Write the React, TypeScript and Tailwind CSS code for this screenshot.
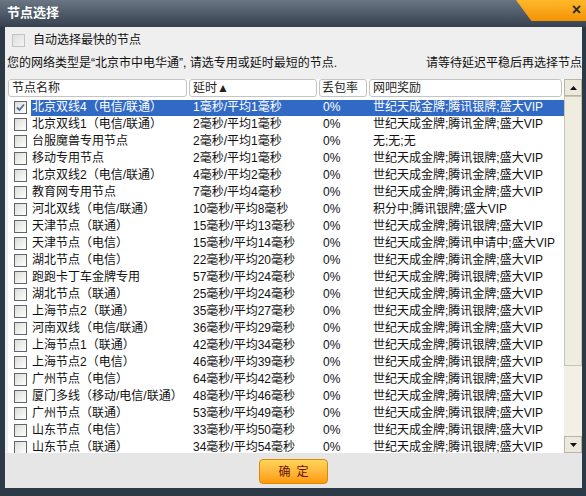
import React from "react";

type NodeRow = { name: string; delay: string; reward: string };

const GOLD = "世纪天成金牌;腾讯金牌;盛大VIP";
const SILVER = "世纪天成金牌;腾讯银牌;盛大VIP";

const rows: NodeRow[] = [
  { name: "北京双线4（电信/联通）", delay: "1毫秒/平均1毫秒", reward: SILVER },
  { name: "北京双线1（电信/联通）", delay: "2毫秒/平均1毫秒", reward: GOLD },
  { name: "台服魔兽专用节点", delay: "2毫秒/平均1毫秒", reward: "无;无;无" },
  { name: "移动专用节点", delay: "2毫秒/平均1毫秒", reward: SILVER },
  { name: "北京双线2（电信/联通）", delay: "4毫秒/平均2毫秒", reward: GOLD },
  { name: "教育网专用节点", delay: "7毫秒/平均4毫秒", reward: GOLD },
  { name: "河北双线（电信/联通）", delay: "10毫秒/平均8毫秒", reward: "积分中;腾讯银牌;盛大VIP" },
  { name: "天津节点（联通）", delay: "15毫秒/平均13毫秒", reward: SILVER },
  { name: "天津节点（电信）", delay: "15毫秒/平均14毫秒", reward: "世纪天成金牌;腾讯申请中;盛大VIP" },
  { name: "湖北节点（电信）", delay: "22毫秒/平均20毫秒", reward: GOLD },
  { name: "跑跑卡丁车金牌专用", delay: "57毫秒/平均24毫秒", reward: SILVER },
  { name: "湖北节点（联通）", delay: "25毫秒/平均24毫秒", reward: GOLD },
  { name: "上海节点2（联通）", delay: "35毫秒/平均27毫秒", reward: SILVER },
  { name: "河南双线（电信/联通）", delay: "36毫秒/平均29毫秒", reward: GOLD },
  { name: "上海节点1（联通）", delay: "42毫秒/平均34毫秒", reward: SILVER },
  { name: "上海节点2（电信）", delay: "46毫秒/平均39毫秒", reward: SILVER },
  { name: "广州节点（电信）", delay: "64毫秒/平均42毫秒", reward: SILVER },
  { name: "厦门多线（移动/电信/联通）", delay: "48毫秒/平均46毫秒", reward: SILVER },
  { name: "广州节点（联通）", delay: "53毫秒/平均49毫秒", reward: SILVER },
  { name: "山东节点（电信）", delay: "33毫秒/平均50毫秒", reward: SILVER },
  { name: "山东节点（联通）", delay: "34毫秒/平均54毫秒", reward: SILVER },
];

function Checkbox({ checked = false }: { checked?: boolean }) {
  return (
    <div className="flex h-[13px] w-[13px] items-center justify-center border border-[#5f6670] bg-gradient-to-br from-[#dcdcd8] to-white">
      {checked && (
        <svg width="9" height="9" viewBox="0 0 9 9">
          <path d="M1 4.5 L3.5 7 L8 1.5" fill="none" stroke="#4a6d9c" strokeWidth="1.8" />
        </svg>
      )}
    </div>
  );
}

function ScrollArrow({ down = false }: { down?: boolean }) {
  return (
    <div className="flex h-[17px] w-full items-center justify-center border border-[#b9b5a4] bg-[#ece9dc]">
      <svg width="7" height="4" viewBox="0 0 7 4">
        <path d={down ? "M0 0 H7 L3.5 4 Z" : "M0 4 H7 L3.5 0 Z"} fill="#111" />
      </svg>
    </div>
  );
}

function HeaderCell({ label, className }: { label: React.ReactNode; className: string }) {
  return (
    <div
      className={`flex h-[18px] items-center rounded-[3px] border border-[#c4c4c4] bg-white text-[#222] ${className}`}
    >
      {label}
    </div>
  );
}

export default function App() {
  return (
    <div className="flex h-[496px] w-[586px] flex-col bg-[#2c3a48] font-[family-name:'Liberation_Sans','Noto_Sans_CJK_SC',sans-serif] text-[12px] text-[#111]">
      {/* title bar */}
      <div className="relative h-[27px] shrink-0 bg-gradient-to-b from-[#6a7683] via-[#4f5b69] to-[#36424f]">
        <div className="pl-[7px] pt-[4px] text-[13px] font-bold leading-[17px] text-white">节点选择</div>
        <div className="absolute right-0 top-0 h-[21px] w-[70px] bg-gradient-to-b from-[#ffb829] to-[#f39300] [clip-path:polygon(0_0,100%_0,100%_100%,22%_100%)]">
          <span className="absolute right-[5px] top-[1px] text-[16px] font-bold leading-[18px] text-[#2a2a2a]">×</span>
        </div>
      </div>

      {/* body */}
      <div className="ml-[5px] mr-[4px] flex flex-1 flex-col bg-[#efefef]">
        <div className="flex h-[26px] shrink-0 items-center gap-[8px] pl-[7px]">
          <div className="h-[13px] w-[13px] border border-[#c3c3c3] bg-gradient-to-br from-[#dedede] to-[#f4f4f4]" />
          <span>自动选择最快的节点</span>
        </div>
        <div className="flex h-[20px] shrink-0 items-center justify-between pl-[2px]">
          <span>您的网络类型是“北京市中电华通”, 请选专用或延时最短的节点.</span>
          <span>请等待延迟平稳后再选择节点</span>
        </div>

        {/* list */}
        <div className="ml-[3px] mt-[6px] flex h-[374px] shrink-0 bg-white">
          <div className="flex flex-1 flex-col overflow-hidden">
            <div className="flex shrink-0 gap-[2px] pr-[2px]">
              <HeaderCell label="节点名称" className="w-[179px] pl-[3px]" />
              <HeaderCell label="延时▲" className="w-[128px] pl-[3px]" />
              <HeaderCell label="丢包率" className="w-[48px] pl-[2px]" />
              <HeaderCell label="网吧奖励" className="flex-1 pl-[3px]" />
            </div>
            <div className="mt-[2px] flex flex-col">
              {rows.map((row, i) => {
                const selected = i === 0;
                return (
                  <div key={row.name} className="flex h-[17px] shrink-0 items-center leading-[17px]">
                    <div className="w-[23px] shrink-0 pl-[6px]">
                      <Checkbox checked={selected} />
                    </div>
                    <div
                      className={`flex h-[16px] flex-1 items-center whitespace-nowrap ${
                        selected ? "bg-[#316ac5] text-white" : ""
                      }`}
                    >
                      <span className="w-[158px] shrink-0 pl-[1px]">{row.name}</span>
                      <span className="w-[130px] shrink-0 pl-[4px]">{row.delay}</span>
                      <span className="w-[50px] shrink-0 pl-[4px]">0%</span>
                      <span className="flex-1 pl-[4px]">{row.reward}</span>
                    </div>
                  </div>
                );
              })}
            </div>
          </div>

          {/* scrollbar */}
          <div className="flex w-[18px] shrink-0 flex-col bg-[#f1efe6]">
            <ScrollArrow />
            <div className="h-[270px] border border-[#c9c5b4] bg-[#efece0]" />
            <div className="flex-1" />
            <ScrollArrow down />
          </div>
        </div>

        {/* footer */}
        <div className="flex flex-1 justify-center bg-[#e6e6e6] pt-[6px]">
          <button className="flex h-[25px] w-[69px] items-center justify-center gap-[6px] rounded-[4px] border border-[#d9890a] bg-gradient-to-b from-[#ffd55a] to-[#ff9a00] text-[12px] text-[#6a1400]">
            <span>确</span>
            <span>定</span>
          </button>
        </div>
      </div>
      <div className="h-[8px] shrink-0" />
    </div>
  );
}
